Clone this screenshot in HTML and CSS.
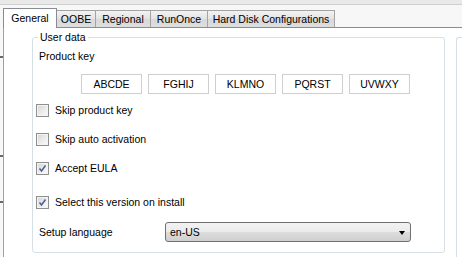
FILE: index.html
```html
<!DOCTYPE html>
<html>
<head>
<meta charset="utf-8">
<link rel="stylesheet" href="styles.css">
</head>
<body>
<div class="window">
  <div class="topstrip"></div>
  <div class="main">
    <div class="gutter">
      <span class="tick t1"></span>
      <span class="tick t2"></span>
      <span class="tick t3"></span>
    </div>
    <div class="tabctl">
      <div class="tabbar">
        <div class="tab selected w-general">General</div>
        <div class="tab w-oobe">OOBE</div>
        <div class="tab w-regional">Regional</div>
        <div class="tab w-runonce">RunOnce</div>
        <div class="tab w-hdc">Hard Disk Configurations</div>
      </div>
      <div class="panel">
        <div class="group">
          <div class="legend">User data</div>
          <div class="label pk">Product key</div>
          <div class="keys">
            <div class="keybox">ABCDE</div>
            <div class="keybox">FGHIJ</div>
            <div class="keybox">KLMNO</div>
            <div class="keybox">PQRST</div>
            <div class="keybox">UVWXY</div>
          </div>
          <div class="check r1"><span class="cb"></span><span>Skip product key</span></div>
          <div class="check r2"><span class="cb"></span><span>Skip auto activation</span></div>
          <div class="check r3"><span class="cb checked"><svg width="9" height="9" viewBox="0 0 9 9"><path d="M1.5 4.5 L3.5 7 L7.5 1.5" fill="none" stroke="#4a5f97" stroke-width="1.5"/></svg></span><span>Accept EULA</span></div>
          <div class="check r4"><span class="cb checked"><svg width="9" height="9" viewBox="0 0 9 9"><path d="M1.5 4.5 L3.5 7 L7.5 1.5" fill="none" stroke="#4a5f97" stroke-width="1.5"/></svg></span><span>Select this version on install</span></div>
          <div class="langrow">
            <div class="langlabel">Setup language</div>
            <div class="combo">
              <span class="combotext">en-US</span>
              <span class="arrow"></span>
            </div>
          </div>
        </div>
        <div class="group2"></div>
      </div>
    </div>
  </div>
</div>
</body>
</html>
```
FILE: styles.css
```css
html, body {
  margin: 0;
  padding: 0;
}
body {
  width: 462px;
  height: 257px;
  overflow: hidden;
  font-family: "Liberation Sans", Arial, sans-serif;
  font-size: 10.5px;
  color: #000;
  background: #ffffff;
}
.window {
  display: flex;
  flex-direction: column;
  height: 257px;
  overflow: hidden;
}
.topstrip {
  height: 4px;
  background: #e9e9e9;
  border-bottom: 1px solid #cfcfcf;
  flex: none;
}
.main {
  display: flex;
  flex: 1;
  min-height: 0;
  background: #f7f7f7;
}
.gutter {
  width: 3px;
  display: flex;
  flex-direction: column;
  flex: none;
}
.tick {
  display: block;
  width: 3px;
  height: 2px;
  background: #6a6a6a;
}
.t1 { margin-top: 51px; }
.t2 { margin-top: 97px; }
.t3 { margin-top: 44px; }
.tabctl {
  flex: 1;
  display: flex;
  flex-direction: column;
  min-height: 0;
}
.tabbar {
  display: flex;
  align-items: flex-end;
  height: 22px;
  border-bottom: 1px solid #898c95;
  flex: none;
}
.tab {
  box-sizing: border-box;
  height: 17px;
  border-top: 1px solid #a3a3a3;
  border-right: 1px solid #a3a3a3;
  background: linear-gradient(#f3f3f3, #e3e3e3 50%, #d9d9d9 51%, #dedede);
  display: flex;
  align-items: center;
  justify-content: center;
  line-height: 13px;
  padding-top: 1px;
}
.tab.selected {
  height: 20px;
  margin-bottom: -1px;
  background: #ffffff;
  border-left: 1px solid #898c95;
  border-top-color: #898c95;
  border-right-color: #898c95;
  align-items: flex-start;
  padding-top: 3px;
  position: relative;
  z-index: 1;
}
.w-general { width: 54px; }
.w-oobe { width: 39px; }
.w-regional { width: 55px; }
.w-runonce { width: 57px; }
.w-hdc { width: 127px; }
.panel {
  flex: 1;
  min-height: 0;
  background: #ffffff;
  border-left: 1px solid #a0a0a0;
  display: flex;
  align-items: flex-start;
  padding: 9px 0 0 28px;
  gap: 11px;
}
.group {
  box-sizing: border-box;
  width: 413px;
  height: 216px;
  border: 1px solid #d5dfe5;
  border-radius: 3px;
  display: flex;
  flex-direction: column;
  flex: none;
}
.group2 {
  flex: 1;
  height: 219px;
  border-top: 1px solid #d5dfe5;
  border-left: 1px solid #d5dfe5;
  border-top-left-radius: 3px;
}
.legend {
  margin: -7px 0 0 5px;
  padding: 0 2px;
  width: fit-content;
  background: #ffffff;
  line-height: 13px;
}
.label {
  line-height: 13px;
  padding-left: 6px;
}
.pk {
  margin-top: 6px;
}
.keys {
  display: flex;
  gap: 6px;
  margin: 11px 0 0 48px;
}
.keybox {
  box-sizing: border-box;
  width: 61px;
  height: 20px;
  border: 1px solid #cfcfcf;
  display: flex;
  align-items: center;
  justify-content: center;
  line-height: 13px;
}
.check {
  display: flex;
  align-items: center;
  gap: 6px;
  margin-left: 3px;
  height: 13px;
  line-height: 13px;
}
.r1 { margin-top: 10px; }
.r2 { margin-top: 16px; }
.r3 { margin-top: 16px; }
.r4 { margin-top: 21px; }
.cb {
  box-sizing: border-box;
  width: 13px;
  height: 13px;
  border: 1px solid #8e8f8f;
  background: linear-gradient(135deg, #d3d3d3, #efefef 60%, #fbfbfb);
  box-shadow: inset 0 0 0 1px #f4f4f4;
  display: flex;
  align-items: center;
  justify-content: center;
  flex: none;
}
.cb svg {
  display: block;
}
.langrow {
  display: flex;
  align-items: center;
  margin-top: 13px;
}
.langlabel {
  width: 132px;
  box-sizing: border-box;
  padding-left: 6px;
  line-height: 13px;
}
.combo {
  box-sizing: border-box;
  width: 246px;
  height: 20px;
  border: 1px solid #707070;
  border-radius: 3px;
  background: linear-gradient(#f2f2f2, #ebebeb 50%, #dddddd 51%, #cfcfcf);
  display: flex;
  align-items: center;
  justify-content: space-between;
  padding: 0 4px 0 4px;
}
.combotext {
  line-height: 13px;
}
.arrow {
  width: 0;
  height: 0;
  border-left: 3.5px solid transparent;
  border-right: 3.5px solid transparent;
  border-top: 4px solid #000;
  margin-right: 1px;
  margin-top: 1px;
}
```
